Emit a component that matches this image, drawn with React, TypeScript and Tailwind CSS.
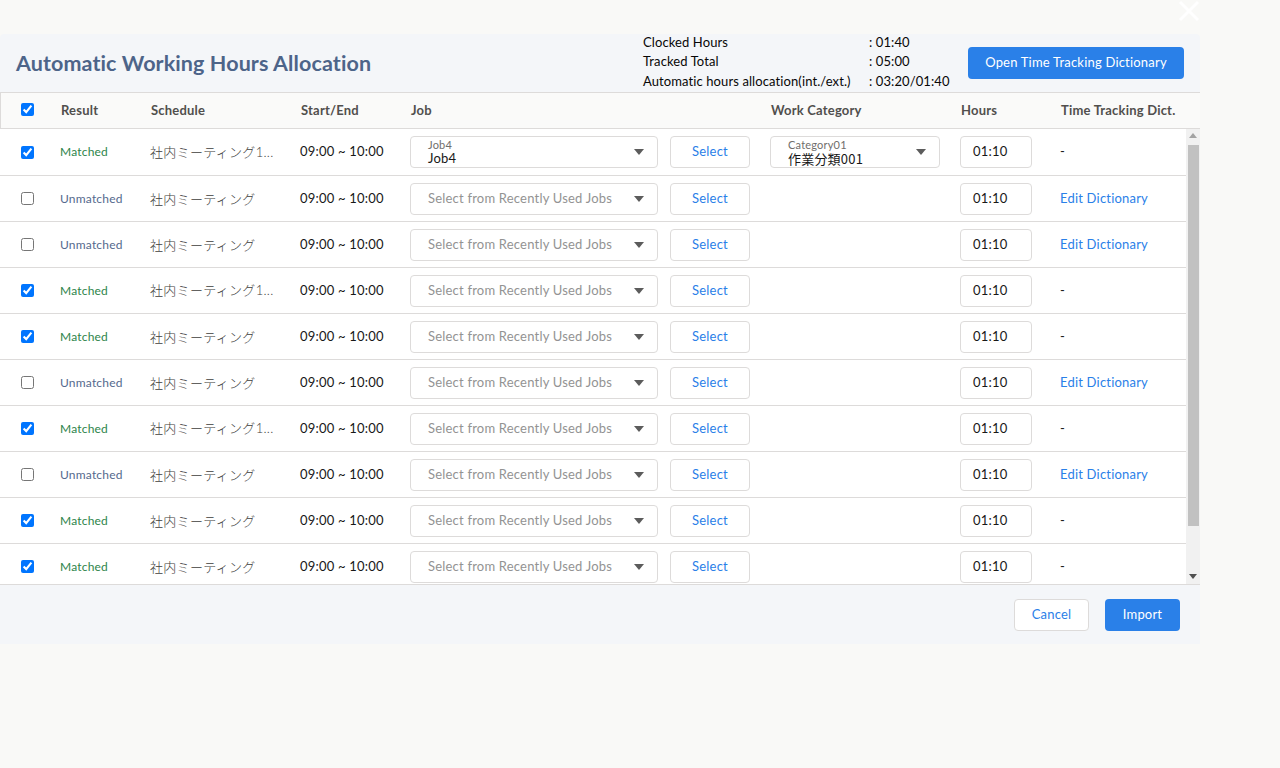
import React from "react";

const FONT = { fontFamily: 'Lato, "Noto Sans CJK JP", sans-serif' };

type Row = { checked: boolean; sched: string; job?: boolean };

const rows: Row[] = [
  { checked: true, sched: "社内ミーティング1...", job: true },
  { checked: false, sched: "社内ミーティング" },
  { checked: false, sched: "社内ミーティング" },
  { checked: true, sched: "社内ミーティング1..." },
  { checked: true, sched: "社内ミーティング" },
  { checked: false, sched: "社内ミーティング" },
  { checked: true, sched: "社内ミーティング1..." },
  { checked: false, sched: "社内ミーティング" },
  { checked: true, sched: "社内ミーティング" },
  { checked: true, sched: "社内ミーティング" },
];

function Caret() {
  return (
    <svg width="10" height="6" viewBox="0 0 10 6" className="shrink-0">
      <path d="M0 0 L10 0 L5 6 Z" fill="#5c5c5c" />
    </svg>
  );
}

function Check({ checked }: { checked: boolean }) {
  return (
    <input
      type="checkbox"
      defaultChecked={checked}
      className="w-[13px] h-[13px] m-0 block"
    />
  );
}

export default function App() {
  return (
    <div className="w-[1280px] h-[768px] bg-[#f9f9f7] text-[13px] text-[#181818] tracking-[0.2px]" style={FONT}>
      <div className="w-[1200px] h-[34px] relative">
        <svg className="absolute right-[0px] top-[0px]" width="22" height="22" viewBox="0 0 22 22">
          <path d="M2 2 L20 20 M20 2 L2 20" stroke="#ffffff" strokeWidth="3" />
        </svg>
      </div>
      <div className="w-[1200px]">
        {/* Header */}
        <div className="h-[58px] bg-[#f4f6f9] flex items-center rounded-t-[4px]">
          <div className="pl-4 text-[21.5px] font-bold text-[#4d6489] tracking-[0.1px] flex-1">
            Automatic Working Hours Allocation
          </div>
          <div className="flex leading-[19.5px] text-[13px] text-[#080707] -mt-[2px] tracking-[0.1px]">
            <div className="w-[226px] whitespace-nowrap">
              <div>Clocked Hours</div>
              <div>Tracked Total</div>
              <div>Automatic hours allocation(int./ext.)</div>
            </div>
            <div className="w-[84px] whitespace-nowrap">
              <div>: 01:40</div>
              <div>: 05:00</div>
              <div>: 03:20/01:40</div>
            </div>
          </div>
          <button className="ml-[15px] mr-4 w-[216px] h-[32px] rounded-[4px] bg-[#2a80e8] text-white text-[13px] tracking-[0.2px]">
            Open Time Tracking Dictionary
          </button>
        </div>
        {/* Table header */}
        <div className="h-[37px] flex items-center bg-[#fafaf9] border-t border-b border-l border-[#dddbda] font-bold text-[#514f4d] text-[13px]">
          <div className="w-[49px] pl-[20px] -mt-[3px]"><Check checked={true} /></div>
          <div className="w-[90px] pl-[11px]">Result</div>
          <div className="w-[150px] pl-[11px]">Schedule</div>
          <div className="w-[110px] pl-[11px]">Start/End</div>
          <div className="w-[260px] pl-[11px]">Job</div>
          <div className="w-[100px]"></div>
          <div className="w-[190px] pl-[11px]">Work Category</div>
          <div className="w-[100px] pl-[11px]">Hours</div>
          <div className="pl-[11px]">Time Tracking Dict.</div>
        </div>
        {/* Body */}
        <div className="h-[455px] flex bg-white overflow-hidden">
          <div className="w-[1186px]">
            {rows.map((r, i) => (
              <div
                key={i}
                className={`${i === 0 ? "h-[47px]" : "h-[46px]"} flex items-center border-b border-[#dddbda]`}
              >
                <div className="w-[50px] pl-[21px]"><Check checked={r.checked} /></div>
                <div className={`w-[90px] pl-[10px] text-[12px] ${r.checked ? "text-[#2e844a]" : "text-[#54698d]"}`}>
                  {r.checked ? "Matched" : "Unmatched"}
                </div>
                <div className="w-[150px] pl-[10px] text-[#3e3e3c] tracking-[0.3px]" style={{ fontFamily: '"Noto Sans CJK JP", Lato, sans-serif', fontWeight: 300 }}>
                  {r.sched.includes("1...") ? (
                    <span>社内ミーティング<span style={FONT}>1...</span></span>
                  ) : r.sched}
                </div>
                <div className="w-[110px] pl-[10px] text-[#181818]">09:00 ~ 10:00</div>
                <div className="w-[260px] pl-[10px]">
                  <div className="w-[248px] h-[32px] border border-[#dddbda] rounded-[4px] flex items-center pl-[17px] pr-[13px]">
                    {r.job ? (
                      <div className="flex-1 leading-none">
                        <div className="text-[11px] text-[#706e6b]">Job4</div>
                        <div className="text-[13px] text-[#181818] mt-[2px]">Job4</div>
                      </div>
                    ) : (
                      <div className="flex-1 text-[#939393]">Select from Recently Used Jobs</div>
                    )}
                    <Caret />
                  </div>
                </div>
                <div className="w-[100px] pl-[10px]">
                  <button className="w-[80px] h-[32px] border border-[#dddbda] rounded-[4px] text-[#2a80e8] text-[13px] bg-white">
                    Select
                  </button>
                </div>
                <div className="w-[190px] pl-[10px]">
                  {r.job && (
                    <div className="w-[170px] h-[32px] border border-[#dddbda] rounded-[4px] flex items-center pl-[17px] pr-[13px]">
                      <div className="flex-1 leading-none">
                        <div className="text-[11px] text-[#706e6b]">Category01</div>
                        <div className="text-[13px] text-[#181818] mt-[2px]" style={{ fontFamily: '"Noto Sans CJK JP", Lato, sans-serif' }}>作業分類001</div>
                      </div>
                      <Caret />
                    </div>
                  )}
                </div>
                <div className="w-[100px] pl-[10px]">
                  <div className="w-[72px] h-[32px] border border-[#dddbda] rounded-[4px] flex items-center pl-[12px] text-[#181818]">
                    01:10
                  </div>
                </div>
                <div className="pl-[10px]">
                  {r.checked ? (
                    <span className="text-[#181818]">-</span>
                  ) : (
                    <span className="text-[#2a80e8]">Edit Dictionary</span>
                  )}
                </div>
              </div>
            ))}
          </div>
          <div className="w-[14px] bg-[#f1f1f1] flex flex-col items-center">
            <svg width="8" height="5" viewBox="0 0 8 5" className="mt-[4px]">
              <path d="M0 5 L8 5 L4 0 Z" fill="#a3a3a3" />
            </svg>
            <div className="w-[11px] h-[381px] bg-[#c1c1c1] mt-[7px]"></div>
            <div className="flex-1"></div>
            <svg width="8" height="5" viewBox="0 0 8 5" className="mb-[5px]">
              <path d="M0 0 L8 0 L4 5 Z" fill="#505050" />
            </svg>
          </div>
        </div>
        {/* Footer */}
        <div className="h-[60px] bg-[#f4f6f9] border-t border-[#dddbda] flex items-center justify-end pr-[20px] gap-4">
          <button className="w-[75px] h-[32px] bg-white border border-[#dddbda] rounded-[4px] text-[#2a80e8] text-[13px]">
            Cancel
          </button>
          <button className="w-[75px] h-[32px] bg-[#2a80e8] rounded-[4px] text-white text-[13px]">
            Import
          </button>
        </div>
      </div>
    </div>
  );
}
